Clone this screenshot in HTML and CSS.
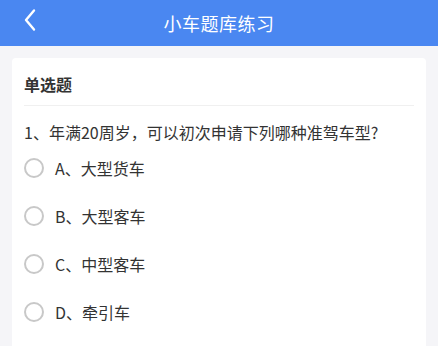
FILE: index.html
```html
<!DOCTYPE html>
<html lang="zh-CN">
<head>
    <meta charset="UTF-8">
    <meta name="viewport" content="width=device-width, initial-scale=1.0">
    <title>小车题库练习</title>
    <link rel="stylesheet" href="styles.css">
</head>
<body>
    <div class="header">
        <span class="back">
            <svg width="14" height="24" viewBox="0 0 14 24">
                <path d="M11 2.5 L3 12 L11 21.5" fill="none" stroke="#fff" stroke-width="2.4" stroke-linecap="round" stroke-linejoin="round"/>
            </svg>
        </span>
        <div class="title">小车题库练习</div>
    </div>
    <div class="page">
        <div class="card">
            <div class="type">单选题</div>
            <div class="question">1、年满20周岁，可以初次申请下列哪种准驾车型?</div>
            <div class="options">
                <div class="option"><span class="radio"></span>A、大型货车</div>
                <div class="option"><span class="radio"></span>B、大型客车</div>
                <div class="option"><span class="radio"></span>C、中型客车</div>
                <div class="option"><span class="radio"></span>D、牵引车</div>
            </div>
        </div>
    </div>
</body>
</html>
```

FILE: styles.css
```css
body {
    margin: 0;
    font-family: "Noto Sans CJK SC", "Noto Sans", sans-serif;
    background-color: #f5f5f8;
    color: #333;
}

.header {
    height: 46px;
    background-color: #4a87f1;
    display: flex;
    align-items: center;
    justify-content: center;
    position: relative;
}

.back {
    position: absolute;
    left: 23px;
    top: 8px;
}

.title {
    color: #fff;
    font-size: 18px;
    letter-spacing: 0.5px;
}

.page {
    padding: 12px 12px 0 12px;
}

.card {
    background: #fff;
    border-radius: 4px;
    padding: 0 12px 20px 12px;
    min-height: 300px;
}

.type {
    font-size: 16px;
    font-weight: bold;
    height: 47px;
    line-height: 52px;
    border-bottom: 1px solid #f0f0f0;
}

.question {
    font-size: 16px;
    margin-top: 14px;
    line-height: 24px;
}

.options {
    margin-top: 0;
}

.option {
    display: flex;
    align-items: center;
    height: 48px;
    font-size: 16px;
}

.radio {
    width: 16px;
    height: 16px;
    border: 2px solid #c8c8c8;
    border-radius: 50%;
    margin-right: 11px;
}
```
